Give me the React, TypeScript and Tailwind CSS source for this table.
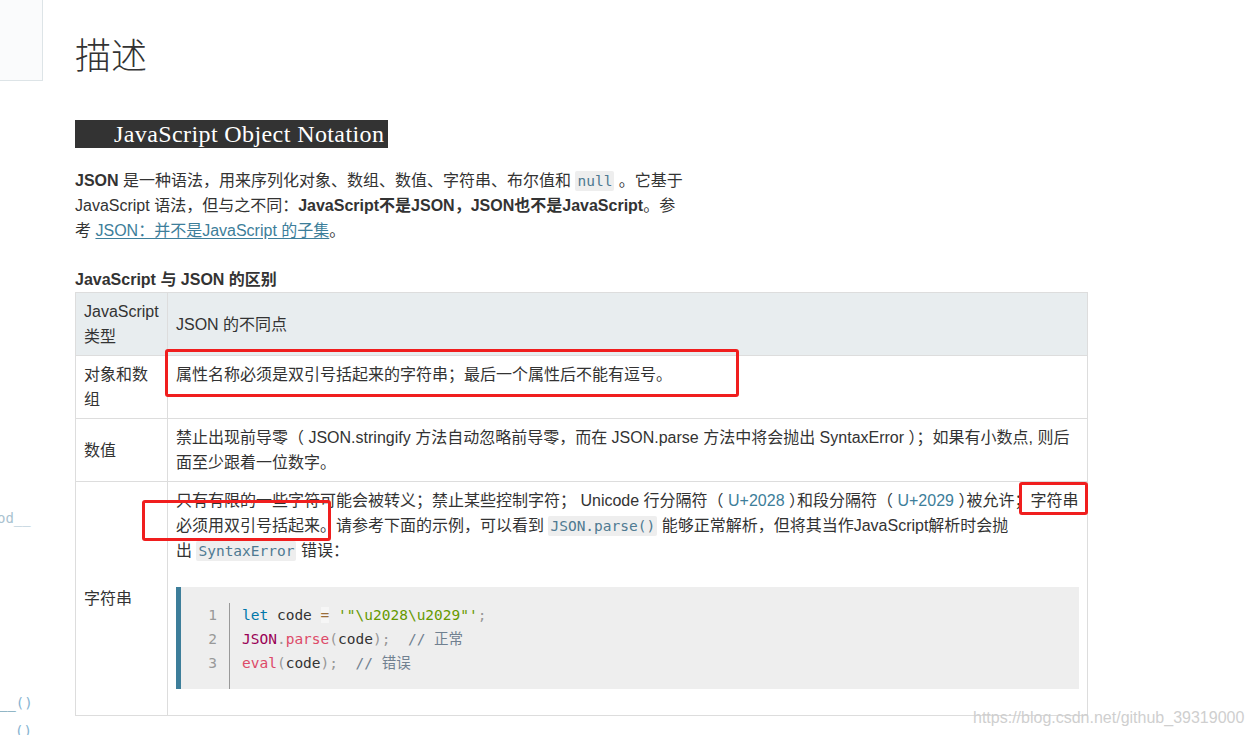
import React from "react";

const Code = ({ children }: { children: React.ReactNode }) => (
  <code className="font-['DejaVu_Sans_Mono','Liberation_Mono',monospace] text-[14.5px] leading-[1] text-[#4f7a92] bg-[#eeeeee] rounded-[2px] px-[2px] py-[2px]">
    {children}
  </code>
);

const Link = ({ children, underline = false }: { children: React.ReactNode; underline?: boolean }) => (
  <span className={underline ? "text-[#3d7e9a] underline underline-offset-2" : "text-[#3d7e9a]"}>{children}</span>
);

const Half = ({ children }: { children: React.ReactNode }) => (
  <span className="[font-feature-settings:'halt']">{children}</span>
);

export default function App() {
  return (
    <div className="relative w-[1252px] h-[735px] overflow-hidden bg-white text-[#333] font-['Liberation_Sans','Noto_Sans_CJK_SC',sans-serif] text-[16px] leading-[25px]">
      <div className="flex">
        <aside className="w-[43px] shrink-0 h-[735px] overflow-hidden flex flex-col font-['DejaVu_Sans_Mono',monospace] text-[14px] leading-[20px]">
          <div className="h-[81px] shrink-0 border-r border-b border-[#dde4e7] bg-[#fafbfc]" />
          <div className="mt-[427px] whitespace-nowrap text-[#a9c2d0] -ml-[3px]">od__</div>
          <div className="mt-[165px] whitespace-nowrap -ml-[1px]">
            <span className="text-[#3d7e9a]">__</span>
            <span className="text-[#86b3d1]">()</span>
          </div>
          <div className="mt-[8px] whitespace-nowrap pl-[15px] text-[#86b3d1]">()</div>
        </aside>

        <main className="ml-[32px] w-[1013px] shrink-0 pt-[35px]">
          <h1 className="text-[36px] leading-[44px] font-light font-['Liberation_Serif','Noto_Sans_CJK_SC',serif] text-[#333]">描述</h1>

          <div className="mt-[41px] w-[313px] h-[28px] bg-[#333] pl-[39px] whitespace-nowrap text-white text-[24px] tracking-[0.4px] leading-[28px] font-['Liberation_Serif',serif]">
            JavaScript Object Notation
          </div>

          <div className="mt-[20px]">
            <div className="whitespace-nowrap">
              <b>JSON</b> 是一种语法，用来序列化对象、数组、数值、字符串、布尔值和 <Code>null</Code> 。它基于
            </div>
            <div className="whitespace-nowrap">
              JavaScript 语法，但与之不同：<b>JavaScript不是JSON，JSON也不是JavaScript</b>。参
            </div>
            <div className="whitespace-nowrap">
              考 <Link underline>JSON：并不是JavaScript 的子集</Link>。
            </div>
          </div>

          <h3 className="mt-[24px] font-bold whitespace-nowrap">JavaScript 与 JSON 的区别</h3>

          <div className="grid grid-cols-[92px_920px] border-l border-t border-[#dddddd]">
            <div className="h-[63px] bg-[#e8edef] border-r border-b border-[#dddddd] px-[8px] flex flex-col justify-center">
              <div>JavaScript</div>
              <div>类型</div>
            </div>
            <div className="h-[63px] bg-[#e8edef] border-r border-b border-[#dddddd] px-[8px] flex items-center">
              JSON 的不同点
            </div>

            <div className="h-[63px] border-r border-b border-[#dddddd] px-[8px] flex flex-col justify-center">
              <div>对象和数</div>
              <div>组</div>
            </div>
            <div className="h-[63px] border-r border-b border-[#dddddd] px-[8px] pt-[6px]">
              属性名称必须是双引号括起来的字符串；最后一个属性后不能有逗号。
            </div>

            <div className="h-[63px] border-r border-b border-[#dddddd] px-[8px] flex items-center">
              数值
            </div>
            <div className="h-[63px] border-r border-b border-[#dddddd] px-[8px] pt-[6px]">
              <div className="whitespace-nowrap">
                禁止出现前导零（ JSON.stringify 方法自动忽略前导零，而在 JSON.parse 方法中将会抛出 SyntaxError ）；如果有小数点, 则后
              </div>
              <div className="whitespace-nowrap">面至少跟着一位数字。</div>
            </div>

            <div className="h-[234px] border-r border-b border-[#dddddd] px-[8px] flex items-center">
              字符串
            </div>
            <div className="h-[234px] border-r border-b border-[#dddddd] px-[8px] pt-[6px]">
              <div className="whitespace-nowrap">
                只有有限的一些字符可能会被转义；禁止某些控制字符； Unicode 行分隔符（ <Link>U+2028</Link> <Half>）</Half>和段分隔符（ <Link>U+2029</Link> <Half>）</Half>被允许；字符串
              </div>
              <div className="whitespace-nowrap">
                必须用双引号括起来。请参考下面的示例，可以看到 <Code>JSON.parse()</Code> 能够正常解析，但将其当作JavaScript解析时会抛
              </div>
              <div className="whitespace-nowrap">
                出 <Code>SyntaxError</Code> 错误：
              </div>

              <div className="mt-[24px] h-[102px] border-l-[5px] border-[#3d7e9a] bg-[#eeeeee] pt-[16px] flex font-['DejaVu_Sans_Mono','Liberation_Mono',monospace] text-[14.5px] leading-[24px]">
                <div className="w-[49px] pr-[12px] text-right border-r border-[#999999] text-[#999999]">
                  <div>1</div>
                  <div>2</div>
                  <div>3</div>
                </div>
                <div className="pl-[12px] whitespace-pre">
                  <div>
                    <span className="text-[#0077aa]">let</span>
                    <span className="text-[#333]"> code </span>
                    <span className="text-[#9a6e3a] bg-[#f6f6f6]">=</span>
                    <span> </span>
                    <span className="text-[#669900]">'"\u2028\u2029"'</span>
                    <span className="text-[#999999]">;</span>
                  </div>
                  <div>
                    <span className="text-[#990055]">JSON</span>
                    <span className="text-[#999999]">.</span>
                    <span className="text-[#dd4a68]">parse</span>
                    <span className="text-[#999999]">(</span>
                    <span className="text-[#333]">code</span>
                    <span className="text-[#999999]">);</span>
                    <span>  </span>
                    <span className="text-[#708090] font-['DejaVu_Sans_Mono','Noto_Sans_CJK_SC',monospace]">// 正常</span>
                  </div>
                  <div>
                    <span className="text-[#dd4a68]">eval</span>
                    <span className="text-[#999999]">(</span>
                    <span className="text-[#333]">code</span>
                    <span className="text-[#999999]">);</span>
                    <span>  </span>
                    <span className="text-[#708090] font-['DejaVu_Sans_Mono','Noto_Sans_CJK_SC',monospace]">// 错误</span>
                  </div>
                </div>
              </div>
            </div>
          </div>
        </main>
      </div>

      {/* annotation boxes */}
      <div className="absolute left-[165px] top-[349px] w-[574px] h-[48px] border-[3px] border-[#f01e1e] rounded-[3px]" />
      <div className="absolute left-[142px] top-[500px] w-[189px] h-[41px] border-[3px] border-[#f01e1e] rounded-[3px]" />
      <div className="absolute left-[1019px] top-[482px] w-[69px] h-[33px] border-[3px] border-[#f01e1e] rounded-[3px]" />

      {/* watermark */}
      <div className="absolute left-[973px] top-[707px] whitespace-nowrap text-[16px] leading-[22px] text-[#cfcfcf] font-['Liberation_Sans',sans-serif]">
        https://blog.csdn.net/github_39319000
      </div>
    </div>
  );
}
